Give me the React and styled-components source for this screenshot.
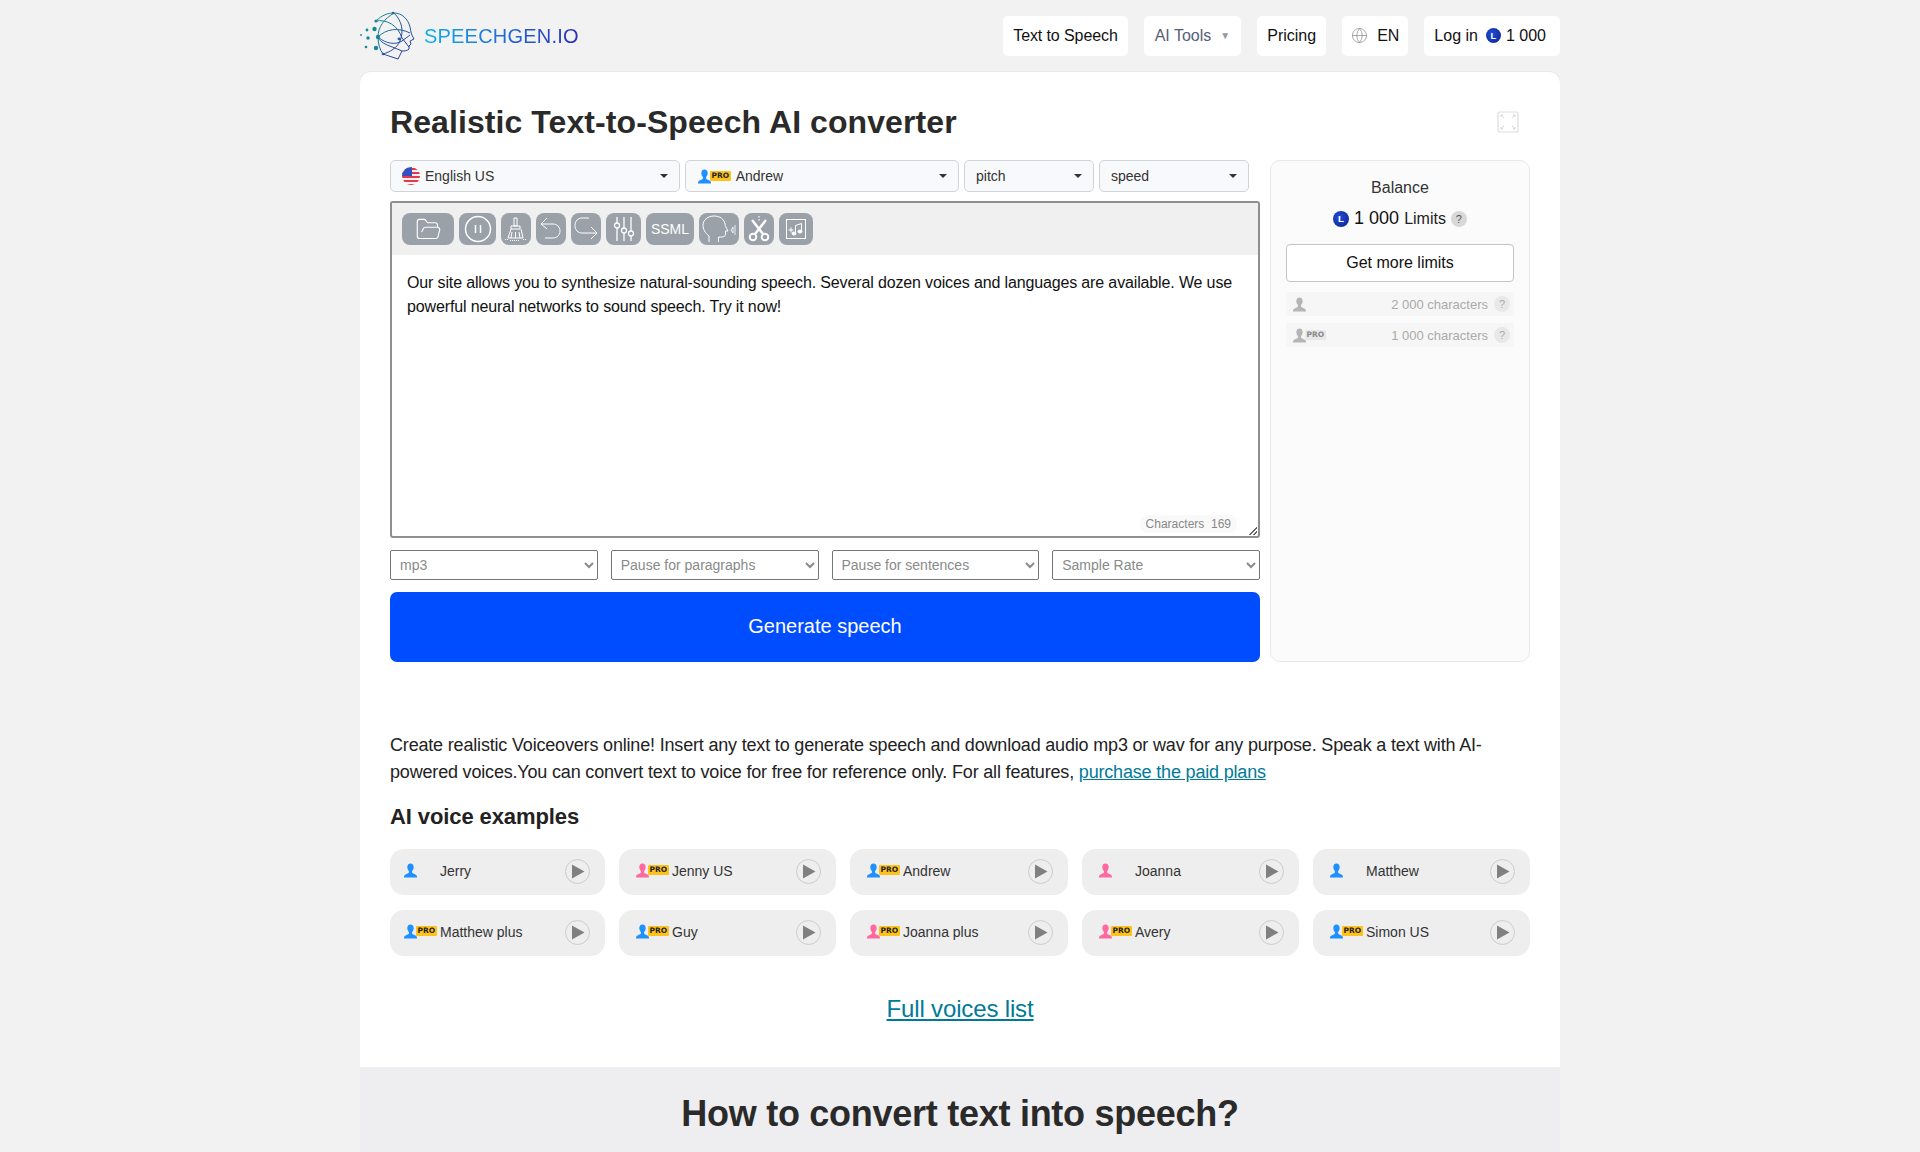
import React from "react";
import styled, { createGlobalStyle } from "styled-components";
import { Globe, FolderOpen } from "lucide-react";

const GlobalStyle = createGlobalStyle`
  html, body {
    margin: 0;
    padding: 0;
    background: #f2f2f2;
    font-family: "Liberation Sans", Arial, sans-serif;
    color: #222;
    overflow: hidden;
  }
`;

const voices = [
  { name: "Jerry", color: "#1e90ff" },
  { name: "Jenny US", color: "#ff69a0", pro: true },
  { name: "Andrew", color: "#1e90ff", pro: true },
  { name: "Joanna", color: "#ff69a0" },
  { name: "Matthew", color: "#1e90ff" },
  { name: "Matthew plus", color: "#1e90ff", pro: true },
  { name: "Guy", color: "#1e90ff", pro: true },
  { name: "Joanna plus", color: "#ff69a0", pro: true },
  { name: "Avery", color: "#ff69a0", pro: true },
  { name: "Simon US", color: "#1e90ff", pro: true },
];

const Person = ({ color, size = 15 }) => (
  <svg width={size} height={size} viewBox="0 0 16 16">
    <path
      fill={color}
      d="M8 0.5c-2.2 0-3.4 1.7-3.4 3.9 0 1.6.7 3.1 1.7 4v1.5c0 .8-.9 1.3-2.4 1.9C2.300 12.400 1 13 1 15.500h14c0-2.500-1.300-3.100-2.900-3.700-1.500-.6-2.400-1.100-2.400-1.900V8.400c1-.9 1.700-2.400 1.700-4C11.400 2.200 10.200.5 8 .5z"
    />
  </svg>
);

const Coin = ({ size = 15 }) => <CoinBadge $size={size}>L</CoinBadge>;

const Logo = () => (
  <svg width="56" height="50" viewBox="0 0 56 50" fill="none">
    <defs>
      <linearGradient id="lg" x1="0" y1="0" x2="1" y2="1">
        <stop offset="0" stopColor="#178f98" />
        <stop offset="1" stopColor="#2b2f9c" />
      </linearGradient>
    </defs>
    <g stroke="url(#lg)" strokeWidth="1">
      <path d="M16 10C22 4 28 2 34 2c8 0 14 6 16 14 1 5 1 7 4 12l-4 2 1 3-2 2v3c-2 2-5 2-7 2l-4 8-15-5" />
      <path d="M34 2C24 8 18 16 18 26c0 7 2 13 5 17M34 2c8 8 10 18 6 28-3 7-10 11-17 13" />
      <path d="M18 26c8-8 20-10 32-4M18 26c8 7 18 8 24 4 3-2 5-4 8-6M16 10c10-2 22 4 26 17l7 9M18 26c3 7 10 8 24 14" />
    </g>
    <g fill="#2a5f9f">
      <circle cx="33" cy="2" r="1.200" />
      <circle cx="39" cy="28" r="1.400" />
      <circle cx="23" cy="43" r="1.300" />
    </g>
    <g fill="#14898f">
      <circle cx="16" cy="10" r="1.600" />
      <circle cx="14.500" cy="18" r="2.200" />
      <circle cx="18" cy="26" r="2.200" />
      <circle cx="16" cy="37" r="2.200" />
      <circle cx="7" cy="19" r="1.400" />
      <circle cx="8" cy="27" r="1.700" />
      <circle cx="6" cy="36" r="1.300" />
      <circle cx="1" cy="24" r="0.900" />
    </g>
  </svg>
);

const Flag = () => (
  <svg width="18" height="18" viewBox="0 0 18 18">
    <defs>
      <clipPath id="flagClip">
        <circle cx="9" cy="9" r="9" />
      </clipPath>
    </defs>
    <g clipPath="url(#flagClip)">
      <rect width="18" height="18" fill="#f4f4f4" />
      <path d="M0 1h18v2H0zM0 5h18v2H0zM0 9h18v2H0zM0 13h18v2H0zM0 17h18v1H0z" fill="#e5384a" />
      <rect width="10" height="9" fill="#3450c0" />
    </g>
  </svg>
);

const ToolIcon = ({ w, h, children, sw = 1 }) => (
  <svg width={w} height={h} viewBox={`0 0 ${w} ${h}`} fill="none" stroke="#fff" strokeWidth={sw}>
    {children}
  </svg>
);

const PauseRing = () => (
  <ToolIcon w={28} h={28} sw={1.500}>
    <circle cx="14" cy="14" r="12.500" />
    <path d="M11.500 10v8M16.500 10v8" />
  </ToolIcon>
);

const Broom = () => (
  <ToolIcon w={24} h={26}>
    <path d="M10 2h3v8h-3zM7 10h9v3H7zM7 13l-3 9h15l-2-9M8 16l-1 6M11.500 16v6M15 16l1 6" />
    <path d="M1 23.500h3M6 24.500h10M19 23.500h3" strokeDasharray="1 1" />
  </ToolIcon>
);

const UndoIcon = () => (
  <ToolIcon w={24} h={24}>
    <path d="M2 7h12c4 0 7 3 7 7s-3 7-7 7H6" />
    <path d="M8 1L2 7l6 5" />
  </ToolIcon>
);

const RedoIcon = () => (
  <ToolIcon w={26} h={26}>
    <path d="M16 2H9C5 2 2 5 2 9.500S5 17 9 17h15" />
    <path d="M18 11l6 6-6 6" />
  </ToolIcon>
);

const KnobSliders = () => (
  <ToolIcon w={24} h={26} sw={1.300}>
    <path d="M5 1v6M5 12v13M12 1v11M12 17v8M19 1v14M19 20v5" />
    <circle cx="5" cy="9.500" r="2.500" />
    <circle cx="12" cy="14.500" r="2.500" />
    <circle cx="19" cy="17.500" r="2.500" />
  </ToolIcon>
);

const Head = () => (
  <ToolIcon w={34} h={28}>
    <path d="M7 27v-6C3 18 1 14 1 10 1 5 6 1 12 1c6 0 10 3 11 8 0 2 1 3 3 7h-2.500v3c0 2-1 3-5 3h-2v5" />
    <path d="M31 12l-2 3 2 3zM33 10v10" strokeWidth="0.800" />
  </ToolIcon>
);

const ScissorsIcon = () => (
  <ToolIcon w={24} h={28} sw={2.400}>
    <path d="M5 5l11 14M19 5L8 19" />
    <circle cx="6" cy="22" r="3.300" strokeWidth="2" />
    <circle cx="18" cy="22" r="3.300" strokeWidth="2" />
    <path d="M12 1v5" strokeWidth="1.200" strokeDasharray="1.500 1.500" />
  </ToolIcon>
);

const MusicBox = () => (
  <ToolIcon w={22} h={22}>
    <rect x="1.500" y="1.500" width="19" height="19" />
    <path d="M3.500 12h5M6 9.500v5" />
    <path d="M10.500 15V7.500l6-2V13" />
    <ellipse cx="9" cy="15.500" rx="2" ry="1.500" fill="#fff" />
    <ellipse cx="15" cy="13.500" rx="2" ry="1.500" fill="#fff" />
  </ToolIcon>
);

const Corners = () => (
  <svg width="22" height="22" viewBox="0 0 22 22" fill="none">
    <rect x="1" y="1" width="20" height="20" rx="2" stroke="#ddd" strokeWidth="1.200" />
    <path d="M4 4l3 3M4 4h2M4 4v2M18 4l-3 3M18 4h-2M18 4v2M4 18l3-3M4 18h2M4 18v-2M18 18l-3-3M18 18h-2M18 18v-2" stroke="#ccc" strokeWidth="0.800" />
  </svg>
);

const Triangle = () => (
  <svg width="14" height="15" viewBox="0 0 14 15">
    <path d="M1 0.500L13.500 7.500 1 14.500z" fill="#808080" />
  </svg>
);

const ProPerson = ({ color, grey }) => (
  <ProWrap>
    <Person color={color} />
    <ProTag $grey={grey}>PRO</ProTag>
  </ProWrap>
);

const App = () => {
  return (
    <>
      <GlobalStyle />
      <Page>
        <Header>
          <Brand>
            <Logo />
            <BrandName>SPEECHGEN.IO</BrandName>
          </Brand>
          <Nav>
            <NavItem $spacing={-0.1}>Text to Speech</NavItem>
            <NavItem $muted $pad="0 11px 1px">
              AI Tools <Caret>▼</Caret>
            </NavItem>
            <NavItem>Pricing</NavItem>
            <NavItem $gap={9} $pad="0 9px 1px">
              <Globe size={17} color="#8a8a8a" strokeWidth={1} /> EN
            </NavItem>
            <NavItem $gap={8} $pad="0 14px 1px 10px">
              Log in <Coin /> <NavCount>1 000</NavCount>
            </NavItem>
          </Nav>
        </Header>

        <Card>
          <Inner>
            <TitleRow>
              <Title>Realistic Text-to-Speech AI converter</Title>
              <ExpandButton>
                <Corners />
              </ExpandButton>
            </TitleRow>

            <Workspace>
              <EditorColumn>
                <DropdownRow>
                  <Dropdown $width={290}>
                    <DropLabel>
                      <Flag /> English US
                    </DropLabel>
                    <DropCaret />
                  </Dropdown>
                  <Dropdown $width={274}>
                    <DropLabel>
                      <ProPerson color="#1e90ff" /> Andrew
                    </DropLabel>
                    <DropCaret />
                  </Dropdown>
                  <Dropdown $width={130}>
                    <DropLabel>pitch</DropLabel>
                    <DropCaret />
                  </Dropdown>
                  <Dropdown $width={150}>
                    <DropLabel>speed</DropLabel>
                    <DropCaret />
                  </Dropdown>
                </DropdownRow>

                <Editor>
                  <Toolbar>
                    <ToolButton $width={52}>
                      <FolderOpen size={27} color="#fff" strokeWidth={1} />
                    </ToolButton>
                    <ToolButton $width={37}>
                      <PauseRing />
                    </ToolButton>
                    <ToolButton $width={30}>
                      <Broom />
                    </ToolButton>
                    <ToolButton $width={30}>
                      <UndoIcon />
                    </ToolButton>
                    <ToolButton $width={30}>
                      <RedoIcon />
                    </ToolButton>
                    <ToolButton $width={35}>
                      <KnobSliders />
                    </ToolButton>
                    <ToolButton $width={48}>SSML</ToolButton>
                    <ToolButton $width={40}>
                      <Head />
                    </ToolButton>
                    <ToolButton $width={30}>
                      <ScissorsIcon />
                    </ToolButton>
                    <ToolButton $width={34}>
                      <MusicBox />
                    </ToolButton>
                  </Toolbar>
                  <EditorText>
                    Our site allows you to synthesize natural-sounding speech. Several dozen voices and languages are
                    available. We use powerful neural networks to sound speech. Try it now!
                  </EditorText>
                  <CharCount>Characters&nbsp; 169</CharCount>
                  <Grip />
                </Editor>

                <OptionRow>
                  <OptionSelect defaultValue="mp3">
                    <option>mp3</option>
                  </OptionSelect>
                  <OptionSelect>
                    <option>Pause for paragraphs</option>
                  </OptionSelect>
                  <OptionSelect>
                    <option>Pause for sentences</option>
                  </OptionSelect>
                  <OptionSelect>
                    <option>Sample Rate</option>
                  </OptionSelect>
                </OptionRow>

                <GenerateButton>Generate speech</GenerateButton>
              </EditorColumn>

              <BalancePanel>
                <BalanceTitle>Balance</BalanceTitle>
                <BalanceAmount>
                  <Coin size={16} />
                  <BalanceNumber>1 000</BalanceNumber> Limits <Hint $size={16}>?</Hint>
                </BalanceAmount>
                <LimitsButton>Get more limits</LimitsButton>
                <LimitList>
                  <LimitRow>
                    <Person color="#b5b5b5" />
                    <LimitText>2 000 characters</LimitText>
                    <Hint $size={16} $light>?</Hint>
                  </LimitRow>
                  <LimitRow>
                    <ProPerson color="#b5b5b5" grey />
                    <LimitText>1 000 characters</LimitText>
                    <Hint $size={16} $light>?</Hint>
                  </LimitRow>
                </LimitList>
              </BalancePanel>
            </Workspace>

            <Intro>
              Create realistic Voiceovers online! Insert any text to generate speech and download audio mp3 or wav for
              any purpose. Speak a text with AI-powered voices.You can convert text to voice for free for reference
              only. For all features, <IntroLink href="#">purchase the paid plans</IntroLink>
            </Intro>

            <SectionTitle>AI voice examples</SectionTitle>
            <VoiceGrid>
              {voices.map((v) => (
                <VoiceCard key={v.name}>
                  <VoiceIcon>
                    {v.pro ? <ProPerson color={v.color} /> : <Person color={v.color} />}
                  </VoiceIcon>
                  <VoiceName>{v.name}</VoiceName>
                  <PlayButton>
                    <Triangle />
                  </PlayButton>
                </VoiceCard>
              ))}
            </VoiceGrid>

            <FullListRow>
              <FullListLink href="#">Full voices list</FullListLink>
            </FullListRow>
          </Inner>

          <HowSection>
            <HowTitle>How to convert text into speech?</HowTitle>
          </HowSection>
        </Card>
      </Page>
    </>
  );
};

export default App;

const Page = styled.div`
  width: 1200px;
  height: 1152px;
  margin: 0 auto;
  overflow: hidden;
`;

const Header = styled.header`
  height: 72px;
  display: flex;
  align-items: flex-start;
  justify-content: space-between;
`;

const Brand = styled.div`
  display: flex;
  align-items: center;
  gap: 8px;
  height: 72px;
`;

const BrandName = styled.span`
  font-size: 20px;
  letter-spacing: 0.2px;
  background: linear-gradient(90deg, #0bb2e8 0%, #1d7fe0 35%, #2a2fb8 100%);
  -webkit-background-clip: text;
  background-clip: text;
  color: transparent;
`;

const Nav = styled.nav`
  display: flex;
  gap: 16px;
  padding-top: 16px;
`;

const NavItem = styled.div`
  display: flex;
  align-items: center;
  gap: ${(p) => (p.$gap ? `${p.$gap}px` : "5px")};
  height: 40px;
  padding: ${(p) => p.$pad || "0 10px 1px"};
  box-sizing: border-box;
  background: #fff;
  border-radius: 5px;
  font-size: 16px;
  letter-spacing: ${(p) => p.$spacing || 0}px;
  color: ${(p) => (p.$muted ? "#566075" : "#111")};
`;

const Caret = styled.span`
  color: #999;
  font-size: 10px;
  margin-left: 4px;
`;

const NavCount = styled.span`
  margin-left: -3px;
`;

const CoinBadge = styled.span`
  display: inline-flex;
  align-items: center;
  justify-content: center;
  flex: none;
  width: ${(p) => p.$size}px;
  height: ${(p) => p.$size}px;
  border-radius: 50%;
  background: radial-gradient(circle at 40% 40%, #1f4fd8, #0d1f8c);
  color: #fff;
  font-size: ${(p) => p.$size * 0.62}px;
  font-weight: 700;
`;

const Card = styled.main`
  background: #fff;
  border-radius: 10px 10px 0 0;
  box-shadow: 0 0 2px rgba(0, 0, 0, 0.12);
  height: 1200px;
`;

const Inner = styled.div`
  padding: 0 30px;
`;

const TitleRow = styled.div`
  height: 88px;
  display: flex;
  align-items: center;
  justify-content: space-between;
  padding-top: 12px;
  box-sizing: border-box;
`;

const Title = styled.h1`
  margin: 0;
  font-size: 32px;
  font-weight: 700;
  letter-spacing: 0.08px;
  color: #2a2a2a;
`;

const ExpandButton = styled.div`
  display: flex;
  margin-right: 11px;
`;

const Workspace = styled.div`
  display: flex;
  gap: 10px;
`;

const EditorColumn = styled.div`
  width: 870px;
`;

const DropdownRow = styled.div`
  display: flex;
  gap: 5px;
`;

const Dropdown = styled.div`
  width: ${(p) => p.$width}px;
  height: 32px;
  box-sizing: border-box;
  display: flex;
  align-items: center;
  justify-content: space-between;
  padding: 0 11px;
  background: #f8f9fa;
  border: 1px solid #ced4da;
  border-radius: 5px;
  font-size: 14px;
  color: #333;
`;

const DropLabel = styled.span`
  display: flex;
  align-items: center;
  gap: 5px;
`;

const DropCaret = styled.span`
  width: 0;
  height: 0;
  border-left: 4px solid transparent;
  border-right: 4px solid transparent;
  border-top: 4px solid #333;
`;

const ProWrap = styled.span`
  display: inline-flex;
  align-items: center;
`;

const ProTag = styled.span`
  margin-left: -2px;
  padding: 0 1.500px;
  height: 10px;
  line-height: 10px;
  border-radius: 1px;
  background: ${(p) => (p.$grey ? "#e8e8e8" : "#ffc21a")};
  color: ${(p) => (p.$grey ? "#888" : "#222")};
  font-family: "DejaVu Sans", sans-serif;
  font-size: 7.500px;
  font-weight: 700;
`;

const Editor = styled.div`
  position: relative;
  margin-top: 9px;
  height: 337px;
  box-sizing: border-box;
  border: 2px solid #8f8f8f;
  border-radius: 3px;
  background: #fff;
`;

const Toolbar = styled.div`
  display: flex;
  gap: 5px;
  height: 52px;
  box-sizing: border-box;
  padding: 10px 10px;
  background: #f0f0f0;
`;

const ToolButton = styled.div`
  width: ${(p) => p.$width}px;
  height: 32px;
  display: flex;
  align-items: center;
  justify-content: center;
  flex: none;
  background: #9aa1a8;
  border-radius: 8px;
  color: #fff;
  font-size: 14px;
  overflow: hidden;
`;

const EditorText = styled.div`
  padding: 16px 15px;
  font-size: 16px;
  letter-spacing: -0.14px;
  line-height: 24px;
  color: #111;
`;

const CharCount = styled.span`
  position: absolute;
  right: 21px;
  bottom: 3px;
  padding: 2px 6px;
  border-radius: 8px;
  background: #f9f9f9;
  color: #888;
  font-size: 12px;
`;

const Grip = styled.span`
  position: absolute;
  right: 1px;
  bottom: 1px;
  width: 8px;
  height: 8px;
  background: linear-gradient(135deg, transparent 50%, #666 50%, #666 60%, transparent 60%, transparent 75%, #666 75%, #666 85%, transparent 85%);
`;

const OptionRow = styled.div`
  display: grid;
  grid-template-columns: repeat(4, 1fr);
  gap: 13px;
  margin-top: 12px;
`;

const OptionSelect = styled.select`
  height: 30px;
  padding: 0 5px;
  background: #fff;
  border: 1px solid #767676;
  border-radius: 2px;
  color: #8a8a8a;
  font-family: "Liberation Sans", sans-serif;
  font-size: 14px;
`;

const GenerateButton = styled.button`
  display: block;
  width: 100%;
  height: 70px;
  margin-top: 12px;
  padding-bottom: 3px;
  border: 0;
  border-radius: 7px;
  background: #004cff;
  color: #fff;
  font-family: "Liberation Sans", sans-serif;
  font-size: 20px;
`;

const BalancePanel = styled.aside`
  width: 260px;
  box-sizing: border-box;
  padding: 18px 15px 15px;
  background: #fbfbfb;
  border: 1px solid #e8e8e8;
  border-radius: 10px;
`;

const BalanceTitle = styled.div`
  text-align: center;
  font-size: 16px;
  color: #333;
`;

const BalanceAmount = styled.div`
  display: flex;
  align-items: center;
  justify-content: center;
  gap: 5px;
  margin-top: 11px;
  font-size: 16px;
  color: #222;
`;

const BalanceNumber = styled.span`
  font-size: 18px;
  color: #111;
`;

const Hint = styled.span`
  display: inline-flex;
  align-items: center;
  justify-content: center;
  width: ${(p) => p.$size}px;
  height: ${(p) => p.$size}px;
  border-radius: 50%;
  background: ${(p) => (p.$light ? "#e8e8e8" : "#d8d8d8")};
  color: ${(p) => (p.$light ? "#aaa" : "#555")};
  font-size: 11px;
  flex: none;
`;

const LimitsButton = styled.div`
  height: 38px;
  margin-top: 15px;
  display: flex;
  align-items: center;
  justify-content: center;
  box-sizing: border-box;
  background: #fff;
  border: 1px solid #c4c4c4;
  border-radius: 4px;
  font-size: 16px;
  color: #111;
`;

const LimitList = styled.div`
  display: flex;
  flex-direction: column;
  gap: 7px;
  margin-top: 10px;
`;

const LimitRow = styled.div`
  height: 24px;
  display: flex;
  align-items: center;
  gap: 6px;
  padding: 0 4px 0 6px;
  background: #f6f6f6;
  border-radius: 3px;
`;

const LimitText = styled.span`
  margin-left: auto;
  font-size: 13px;
  color: #aaa;
`;

const Intro = styled.p`
  margin: 70px 0 0;
  font-size: 18px;
  letter-spacing: -0.18px;
  line-height: 27px;
  color: #222;
`;

const IntroLink = styled.a`
  color: #007a99;
`;

const SectionTitle = styled.h2`
  margin: 17px 0 0;
  font-size: 22px;
  letter-spacing: -0.1px;
  line-height: 28px;
  font-weight: 700;
  color: #222;
`;

const VoiceGrid = styled.div`
  display: grid;
  grid-template-columns: 215px 217px 218px 217px 217px;
  gap: 15px 14px;
  margin-top: 18px;
`;

const VoiceCard = styled.div`
  height: 46px;
  display: flex;
  align-items: center;
  padding: 0 15px 2px 13px;
  box-sizing: border-box;
  background: #eee;
  border-radius: 14px;

  &:not(:nth-child(5n + 1)) {
    padding-left: 16px;
  }
`;

const VoiceIcon = styled.span`
  width: 37px;
  flex: none;
  display: flex;
  align-items: center;
  margin-top: -2px;
`;

const VoiceName = styled.span`
  font-size: 14px;
  color: #333;
`;

const PlayButton = styled.span`
  margin-left: auto;
  width: 25px;
  height: 25px;
  box-sizing: border-box;
  display: flex;
  align-items: center;
  justify-content: center;
  border: 1px solid #ccc;
  border-radius: 50%;
`;

const FullListRow = styled.div`
  margin-top: 39px;
  text-align: center;
`;

const FullListLink = styled.a`
  font-size: 24px;
  letter-spacing: -0.15px;
  color: #007a99;
`;

const HowSection = styled.section`
  margin-top: 44px;
  padding-top: 26px;
  height: 300px;
  background: #eeeef0;
  text-align: center;
`;

const HowTitle = styled.h2`
  margin: 0;
  font-size: 36px;
  letter-spacing: -0.27px;
  font-weight: 700;
  color: #2a2a2a;
`;
